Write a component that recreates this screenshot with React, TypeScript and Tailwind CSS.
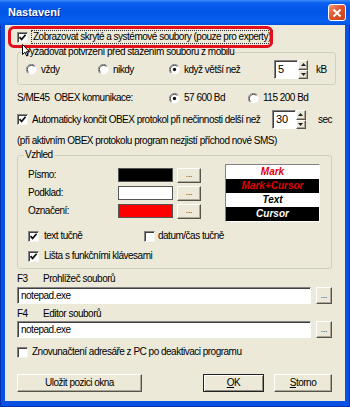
import React from 'react';

function Check({ checked }: { checked?: boolean }) {
  return (
    <span className="w-[11px] h-[11px] shrink-0 bg-white border border-t-[#848284] border-l-[#848284] border-r-[#f4f3ee] border-b-[#f4f3ee] shadow-[inset_1px_1px_0_#404040] flex items-center justify-center">
      {checked && (
        <svg width="9" height="9" viewBox="0 0 9 9">
          <path d="M1.5 4.2 L3.6 6.4 L7.6 1.8" fill="none" stroke="#111" strokeWidth="1.7" />
        </svg>
      )}
    </span>
  );
}

function Radio({ checked }: { checked?: boolean }) {
  return (
    <svg width="11" height="11" viewBox="0 0 12 12" className="shrink-0">
      <circle cx="6" cy="6" r="5.5" fill="#fff" />
      <path d="M10 2 A5.5 5.5 0 0 0 2 10" fill="none" stroke="#808080" strokeWidth="1" />
      <path d="M9.2 2.8 A4.5 4.5 0 0 0 2.8 9.2" fill="none" stroke="#404040" strokeWidth="1" />
      {checked && <circle cx="6" cy="6" r="1.8" fill="#111" />}
    </svg>
  );
}

function Btn({ children, className = '', primary }: { children: React.ReactNode; className?: string; primary?: boolean }) {
  return (
    <div
      className={`flex items-center justify-center bg-[#ECE9D8] border ${
        primary
          ? 'border-[#222] shadow-[inset_1px_1px_0_#fff,inset_-1px_-1px_0_#8e8c80]'
          : 'border-t-[#fff] border-l-[#fff] border-r-[#55534a] border-b-[#55534a] shadow-[inset_-1px_-1px_0_#aca899]'
      } ${className}`}
    >
      {children}
    </div>
  );
}

function Spin({ value }: { value: string }) {
  return (
    <div className="flex h-[19px]">
      <div className="w-[24px] h-full bg-white border border-t-[#848284] border-l-[#848284] border-r-white border-b-white shadow-[inset_1px_1px_0_#404040] pl-[3px] flex items-center text-[11px] tracking-normal">
        {value}
      </div>
      <div className="w-[10px] h-full flex flex-col">
        <Btn className="h-1/2">
          <svg width="5" height="3" viewBox="0 0 5 3"><path d="M0 3 L2.5 0 L5 3Z" fill="#222" /></svg>
        </Btn>
        <Btn className="h-1/2">
          <svg width="5" height="3" viewBox="0 0 5 3"><path d="M0 0 L2.5 3 L5 0Z" fill="#222" /></svg>
        </Btn>
      </div>
    </div>
  );
}

function TextInput({ value }: { value: string }) {
  return (
    <div className="flex-1 h-[17px] bg-white border border-t-[#848284] border-l-[#848284] border-r-white border-b-white shadow-[inset_1px_1px_0_#404040] pl-[3px] flex items-center">
      {value}
    </div>
  );
}

export default function App() {
  return (
    <div className="w-[350px] h-[407px] flex flex-col overflow-hidden bg-[#0a4ee0] font-['Liberation_Sans',Arial,sans-serif] text-[10px] tracking-[-0.5px] text-black leading-none">
      {/* title bar */}
      <div className="h-[25px] shrink-0 flex items-center justify-between pl-[8px] pr-[4px] bg-[linear-gradient(180deg,#3c8cf8_0%,#0a5ef0_12%,#0054e6_45%,#0760f0_85%,#0050dc_100%)]">
        <span className="text-white font-bold text-[11px] tracking-normal [text-shadow:1px_1px_0_#0a1f80]">Nastavení</span>
        <div className="w-[18px] h-[17px] rounded-[3px] border border-white bg-[linear-gradient(135deg,#f09a78,#e0552e_45%,#c8401c)] flex items-center justify-center">
          <svg width="10" height="10" viewBox="0 0 10 10">
            <path d="M1.5 1.5 L8.5 8.5 M8.5 1.5 L1.5 8.5" stroke="#fff" strokeWidth="2" />
          </svg>
        </div>
      </div>

      {/* frame */}
      <div className="flex-1 px-[4px] pb-[5px] bg-[#0a50e2] border-l border-r border-b border-[#0031b0]">
        <div className="relative h-full bg-[#ECE9D8] pl-[12px] pr-[13px] pt-[5px]">
          {/* red annotation */}
          <div className="absolute left-[3px] top-[1px] w-[265px] h-[22px] border-[3px] border-[#e2101c] rounded-[6px]" />
          {/* mouse pointer */}
          <svg className="absolute left-[17px] top-[19px]" width="8" height="13" viewBox="0 0 8 13">
            <path d="M0.5 0.5 L0.5 10.5 L3 8.2 L4.6 12 L6 11.4 L4.5 7.7 L7.5 7.7 Z" fill="#fff" stroke="#000" strokeWidth="1" />
          </svg>

          {/* row 1 */}
          <div className="h-[14px] flex items-center">
            <Check checked />
            <span className="ml-[3px] px-[1px] h-[14px] flex items-center border border-dotted border-[#333]">
              Zobrazovat skryté a systémové soubory (pouze pro experty)
            </span>
          </div>

          {/* group 1 */}
          <fieldset className="mt-[2px] border border-[#D0D0BF] rounded-[3px] pl-[8px] pr-[8px] pb-[5px]">
            <legend className="ml-[-3px] px-[1px] leading-[12px]">Vyžadovat potvrzení před stažením souboru z mobilu</legend>
            <div className="mt-[2px] h-[19px] flex items-center">
              <div className="w-[72px] flex items-center gap-[4px]"><Radio />vždy</div>
              <div className="w-[71px] flex items-center gap-[4px]"><Radio />nikdy</div>
              <div className="w-[105px] flex items-center gap-[4px]"><Radio checked />když větší než</div>
              <Spin value="5" />
              <span className="ml-[8px]">kB</span>
            </div>
          </fieldset>

          {/* OBEX */}
          <div className="mt-[6px] h-[14px] flex items-center">
            <span className="w-[152px]">S/ME45&nbsp; OBEX komunikace:</span>
            <div className="w-[79px] flex items-center gap-[4px]"><Radio checked />57 600 Bd</div>
            <div className="flex items-center gap-[4px]"><Radio />115 200 Bd</div>
          </div>

          <div className="mt-[5px] h-[19px] flex items-center">
            <Check checked />
            <span className="ml-[4px] w-[242px]">Automaticky končit OBEX protokol při nečinnosti delší než</span>
            <Spin value="30" />
            <span className="ml-[12px]">sec</span>
          </div>

          <div className="mt-[5px] h-[14px] flex items-center">
            (při aktivním OBEX protokolu program nezjistí příchod nové SMS)
          </div>

          {/* Vzhled */}
          <fieldset className="mt-[1px] border border-[#D0D0BF] rounded-[3px] pl-[10px] pr-[8px] pb-[5px]">
            <legend className="ml-[-4px] px-[1px] leading-[12px]">Vzhled</legend>
            <div className="mt-[3px] flex items-start">
              <div className="mt-[4px] flex flex-col gap-[4px]">
                {[
                  ['Písmo:', 'bg-black'],
                  ['Podklad:', 'bg-white'],
                  ['Označení:', 'bg-[#ff0000]'],
                ].map(([label, c]) => (
                  <div key={label} className="h-[14px] flex items-center">
                    <span className="w-[90px]">{label}</span>
                    <span className={`w-[55px] h-[14px] border border-[#555] ${c}`} />
                    <Btn className="ml-[4px] w-[24px] h-[15px] text-[8px] tracking-normal">...</Btn>
                  </div>
                ))}
              </div>
              <div className="ml-[24px] w-[95px] border border-t-[#848284] border-l-[#848284] border-r-white border-b-white font-bold italic text-[10px] tracking-normal">
                <div className="h-[14px] flex items-center justify-center bg-white text-[#e00000]">Mark</div>
                <div className="h-[14px] flex items-center justify-center bg-black text-[#e00000]">Mark+Cursor</div>
                <div className="h-[14px] flex items-center justify-center bg-white text-black">Text</div>
                <div className="h-[14px] flex items-center justify-center bg-black text-white">Cursor</div>
              </div>
            </div>
            <div className="mt-[7px] h-[14px] flex items-center">
              <div className="w-[116px] flex items-center gap-[5px]"><Check checked />text tučně</div>
              <div className="flex items-center gap-[3px]"><Check />datum/čas tučně</div>
            </div>
            <div className="mt-[6px] h-[14px] flex items-center gap-[5px]">
              <Check checked />Lišta s funkčními klávesami
            </div>
          </fieldset>

          {/* F3 */}
          <div className="mt-[4px] h-[12px] flex items-center">
            <span className="w-[26px]">F3</span>Prohlížeč souborů
          </div>
          <div className="mt-[2px] flex items-center gap-[5px]">
            <TextInput value="notepad.exe" />
            <Btn className="w-[16px] h-[17px] text-[8px] tracking-normal">...</Btn>
          </div>

          <div className="mt-[4px] h-[12px] flex items-center">
            <span className="w-[26px]">F4</span>Editor souborů
          </div>
          <div className="mt-[1px] flex items-center gap-[5px]">
            <TextInput value="notepad.exe" />
            <Btn className="w-[16px] h-[17px] text-[8px] tracking-normal">...</Btn>
          </div>

          <div className="mt-[7px] h-[14px] flex items-center gap-[4px]">
            <Check />Znovunačtení adresáře z PC po deaktivaci programu
          </div>

          {/* buttons */}
          <div className="mt-[15px] flex items-center">
            <Btn className="w-[125px] h-[18px]">Uložit pozici okna</Btn>
            <div className="flex-1" />
            <Btn primary className="w-[61px] h-[18px]"><span><u>O</u>K</span></Btn>
            <Btn className="ml-[10px] w-[58px] h-[18px]"><span><u>S</u>torno</span></Btn>
          </div>
        </div>
      </div>
    </div>
  );
}
